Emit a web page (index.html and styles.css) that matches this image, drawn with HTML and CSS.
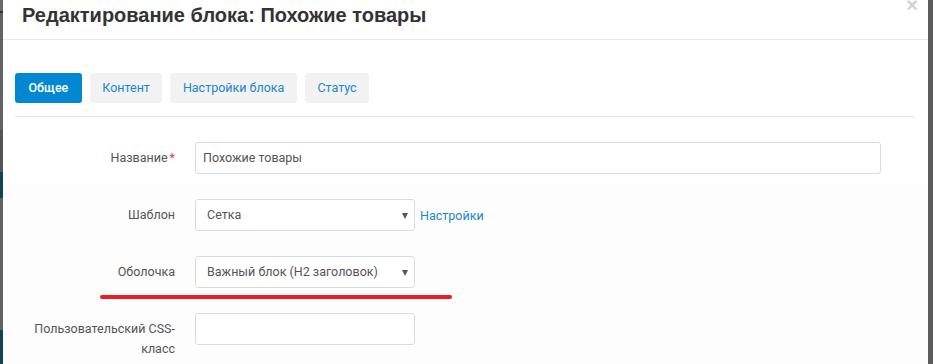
FILE: index.html
```html
<!DOCTYPE html>
<html lang="ru">
<head>
  <meta charset="UTF-8" />
  <title>Редактирование блока</title>
  <link rel="stylesheet" href="styles.css">
</head>
<body>

<div class="page-edge"></div>

<div class="modal">
  <div class="modal-header">
    <h4 class="modal-title">Редактирование блока: Похожие товары</h4>
    <span class="close">&times;</span>
  </div>

  <div class="modal-body">
    <div class="tabs">
      <span class="tab active">Общее</span>
      <span class="tab">Контент</span>
      <span class="tab">Настройки блока</span>
      <span class="tab">Статус</span>
    </div>

    <div class="form">
      <div class="row">
        <label class="label">Название<span class="req">*</span></label>
        <div class="field">
          <div class="input wide">Похожие товары</div>
        </div>
      </div>

      <div class="row">
        <label class="label">Шаблон</label>
        <div class="field">
          <div class="select">Сетка<span class="caret"></span></div>
          <a class="link">Настройки</a>
        </div>
      </div>

      <div class="row">
        <label class="label">Оболочка</label>
        <div class="field">
          <div class="select">Важный блок (H2 заголовок)<span class="caret"></span></div>
        </div>
        <div class="mark"></div>
      </div>

      <div class="row">
        <label class="label">Пользовательский CSS-класс</label>
        <div class="field">
          <div class="input short"></div>
        </div>
      </div>
    </div>
  </div>
</div>

</body>
</html>
```

FILE: styles.css
```css
body {
  margin: 0;
  height: 364px;
  overflow: hidden;
  display: flex;
  background: #5b5b5b;
  font-family: Roboto, "Liberation Sans", sans-serif;
  font-size: 12.5px;
  color: #555;
}
.page-edge {
  width: 3px;
  flex: none;
  background: linear-gradient(to bottom,
    #6a6a6a 0 11px, #2e2e2e 11px 13px, #626262 13px 130px,
    #555 130px 172px, #0f4457 172px 198px, #626262 198px 330px,
    #0f4457 330px);
}
.modal {
  width: 925px;
  flex: none;
  background: linear-gradient(to bottom, #fff 0 185px, #fdfdfd 185px);
}
.modal-header {
  display: flex;
  height: 35px;
  padding: 4px 0 0 19px;
  border-bottom: 1px solid #e8e8e8;
}
.modal-title {
  flex: 1;
  margin: 0;
  font-family: "Liberation Sans", Arial, sans-serif;
  font-size: 20px;
  line-height: 23px;
  font-weight: bold;
  color: #333;
}
.close {
  margin: -9px 10px 0 0;
  font-family: "Liberation Sans", Arial, sans-serif;
  font-size: 20px;
  font-weight: bold;
  line-height: 20px;
  color: #d2d2d2;
}
.modal-body {
  padding: 33px 13px 0 12px;
}
.tabs {
  display: flex;
  gap: 8px;
  padding-bottom: 13px;
  border-bottom: 1px solid #dfe5ee;
}
.tab {
  height: 30px;
  line-height: 30px;
  padding: 0 12.5px;
  border-radius: 3px;
  background: #f2f2f2;
  color: #1b88c9;
}
.tab.active {
  padding: 0 13.5px;
  background: #0288d1;
  color: #fff;
  font-weight: 500;
}
.form {
  padding-top: 25px;
  display: flex;
  flex-direction: column;
  gap: 25px;
}
.row {
  position: relative;
  display: grid;
  grid-template-columns: 160px 1fr;
  column-gap: 20px;
  align-items: start;
}
.label {
  padding-top: 6px;
  line-height: 20px;
  text-align: right;
}
.req {
  color: #e8394d;
  margin-left: 2px;
}
.field {
  display: flex;
  align-items: center;
  gap: 5px;
}
.input,
.select {
  box-sizing: border-box;
  height: 32px;
  line-height: 30px;
  border: 1px solid #d6dde6;
  border-radius: 3px;
  background: #fff;
}
.input {
  padding: 0 7px;
}
.input.wide {
  width: 686px;
}
.input.short {
  width: 220px;
}
.select {
  position: relative;
  width: 220px;
  padding: 0 11px;
}
.caret {
  position: absolute;
  right: 6px;
  top: 13px;
  border-left: 3.5px solid transparent;
  border-right: 3.5px solid transparent;
  border-top: 6px solid #555;
}
.link {
  color: #1b88c9;
  cursor: pointer;
}
.mark {
  position: absolute;
  left: 85px;
  top: 39px;
  width: 352px;
  height: 4px;
  border-radius: 2px;
  background: #ed1c24;
}
```
